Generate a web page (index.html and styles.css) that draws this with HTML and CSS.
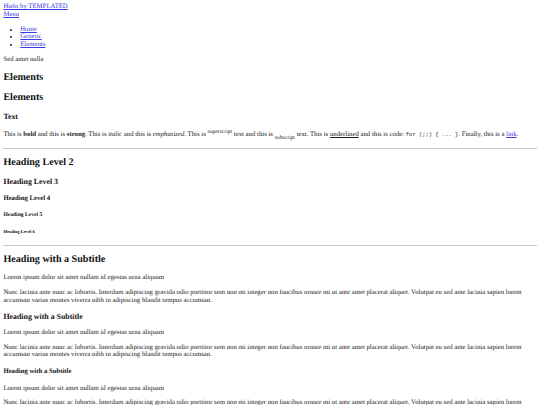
FILE: index.html
```html
<!DOCTYPE html>
<html lang="en">
<head>
<meta charset="utf-8">
<title>Elements - Hielo by TEMPLATED</title>
<link rel="stylesheet" href="styles.css">
</head>
<body class="page">
<header class="site-header">
  <div class="logo"><a class="link" href="#">Hielo by TEMPLATED</a></div>
  <a class="link" href="#menu">Menu</a>
</header>
<nav class="menu">
  <ul class="links">
    <li><a class="link" href="#">Home</a></li>
    <li><a class="link" href="#">Generic</a></li>
    <li><a class="link" href="#">Elements</a></li>
  </ul>
</nav>
<section class="banner">
  <header class="sec-header">
    <p class="text">Sed amet nulla</p>
    <h2 class="h2">Elements</h2>
  </header>
</section>
<section class="content">
  <header class="sec-header">
    <h2 class="h2">Elements</h2>
  </header>
  <h3 class="h3">Text</h3>
  <p class="text">This is <b>bold</b> and this is <strong>strong</strong>. This is <i>italic</i> and this is <em>emphasized</em>. This is <sup>superscript</sup> text and this is <sub>subscript</sub> text. This is <u>underlined</u> and this is code: <code class="code">for (;;) { ... }</code>. Finally, this is a <a class="link" href="#">link</a>.</p>
  <hr class="rule">
  <h2 class="h2">Heading Level 2</h2>
  <h3 class="h3">Heading Level 3</h3>
  <h4 class="h4">Heading Level 4</h4>
  <h5 class="h5">Heading Level 5</h5>
  <h6 class="h6">Heading Level 6</h6>
  <hr class="rule">
  <h2 class="h2">Heading with a Subtitle</h2>
  <p class="text">Lorem ipsum dolor sit amet nullam id egestas urna aliquam</p>
  <p class="text">Nunc lacinia ante nunc ac lobortis. Interdum adipiscing gravida odio porttitor sem non mi integer non faucibus ornare mi ut ante amet placerat aliquet. Volutpat eu sed ante lacinia sapien lorem accumsan varius montes viverra nibh in adipiscing blandit tempus accumsan.</p>
  <h3 class="h3">Heading with a Subtitle</h3>
  <p class="text">Lorem ipsum dolor sit amet nullam id egestas urna aliquam</p>
  <p class="text">Nunc lacinia ante nunc ac lobortis. Interdum adipiscing gravida odio porttitor sem non mi integer non faucibus ornare mi ut ante amet placerat aliquet. Volutpat eu sed ante lacinia sapien lorem accumsan varius montes viverra nibh in adipiscing blandit tempus accumsan.</p>
  <h4 class="h4">Heading with a Subtitle</h4>
  <p class="text">Lorem ipsum dolor sit amet nullam id egestas urna aliquam</p>
  <p class="text">Nunc lacinia ante nunc ac lobortis. Interdum adipiscing gravida odio porttitor sem non mi integer non faucibus ornare mi ut ante amet placerat aliquet. Volutpat eu sed ante lacinia sapien lorem accumsan varius montes viverra nibh in adipiscing blandit tempus accumsan.</p>
</section>
</body>
</html>
```
FILE: styles.css
```css
html { background: #fff; overflow: hidden; }
.page {
  margin: 3.375px;
  font-family: "Liberation Serif", "Times New Roman", serif;
  font-size: 6.75px;
  line-height: 1.15;
  color: #222;
  text-rendering: geometricPrecision;
  -webkit-font-smoothing: antialiased;
}
.link { color: #3b3be6; }
.links { margin: 1em 0; padding-left: 16.875px; }
.text { margin: 1em 0; }
.h2, .h3, .h4, .h5, .h6 { color: #111; font-weight: bold; }
.h2 { font-size: 1.5em; margin: 0.83em 0; }
.h3 { font-size: 1.17em; margin: 1em 0; }
.h4 { font-size: 1em; margin: 1.33em 0; }
.h5 { font-size: 0.83em; margin: 1.67em 0; }
.h6 { font-size: 0.67em; margin: 2.33em 0; }
.code { font-family: "Liberation Mono", "Courier New", monospace; font-size: 0.8125em; }
.rule { border: 0; border-top: 1px solid #c8c8c8; margin: 3.375px 0; height: 0; }
```
